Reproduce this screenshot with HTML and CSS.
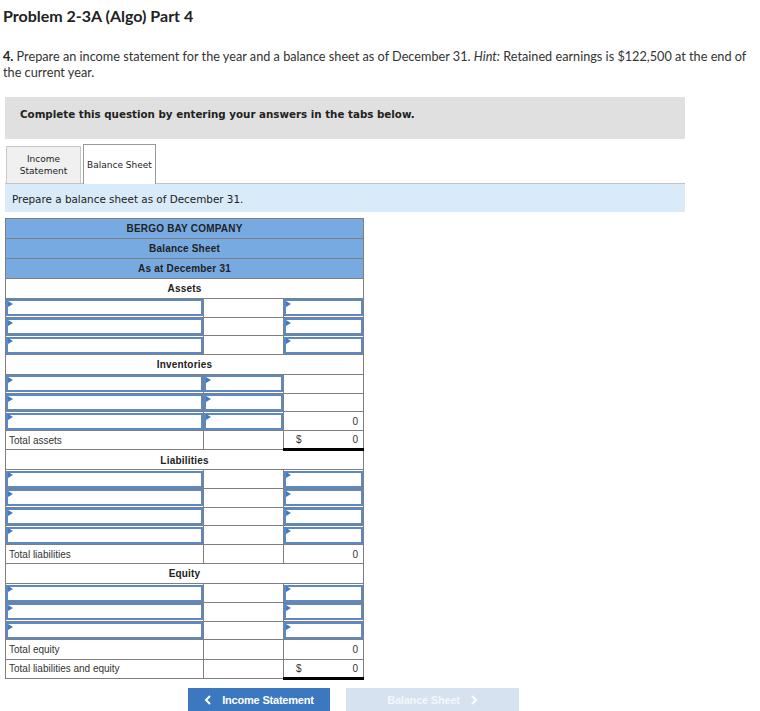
FILE: index.html
```html
<!DOCTYPE html>
<html lang="en">
<head>
  <meta charset="UTF-8" />
  <title>Problem 2-3A (Algo) Part 4</title>
  <link rel="stylesheet" href="styles.css">
</head>
<body>
  <div class="page">
    <h1>Problem 2-3A (Algo) Part 4</h1>
    <p class="prompt"><b>4.</b> Prepare an income statement for the year and a balance sheet as of December 31. <i>Hint:</i> Retained earnings is $122,500 at the end of the current year.</p>

    <div class="notice">Complete this question by entering your answers in the tabs below.</div>

    <div class="tabs">
      <div class="tab">Income<br>Statement</div>
      <div class="tab active">Balance Sheet</div>
    </div>
    <div class="instruct">Prepare a balance sheet as of December 31.</div>

    <table class="sheet">
      <colgroup><col class="c1"><col class="c2"><col class="c3"></colgroup>
      <tr class="hd"><td colspan="3">BERGO BAY COMPANY</td></tr>
      <tr class="hd"><td colspan="3">Balance Sheet</td></tr>
      <tr class="hd"><td colspan="3">As at December 31</td></tr>
      <tr class="sec"><td colspan="3">Assets</td></tr>
      <tr class="in"><td class="inp"><input><span class="flag"></span></td><td></td><td class="inp"><input><span class="flag"></span></td></tr>
      <tr class="in"><td class="inp"><input><span class="flag"></span></td><td></td><td class="inp"><input><span class="flag"></span></td></tr>
      <tr class="in"><td class="inp"><input><span class="flag"></span></td><td></td><td class="inp"><input><span class="flag"></span></td></tr>
      <tr class="sec"><td colspan="3">Inventories</td></tr>
      <tr class="in"><td class="inp"><input><span class="flag"></span></td><td class="inp"><input><span class="flag"></span></td><td></td></tr>
      <tr class="in"><td class="inp"><input><span class="flag"></span></td><td class="inp"><input><span class="flag"></span></td><td></td></tr>
      <tr class="in"><td class="inp"><input><span class="flag"></span></td><td class="inp"><input><span class="flag"></span></td><td class="num">0</td></tr>
      <tr class="tot"><td>Total assets</td><td class="rule"></td><td class="num rule dbl"><span class="cur">$</span>0</td></tr>
      <tr class="sec"><td colspan="3">Liabilities</td></tr>
      <tr class="in"><td class="inp"><input><span class="flag"></span></td><td></td><td class="inp"><input><span class="flag"></span></td></tr>
      <tr class="in"><td class="inp"><input><span class="flag"></span></td><td></td><td class="inp"><input><span class="flag"></span></td></tr>
      <tr class="in"><td class="inp"><input><span class="flag"></span></td><td></td><td class="inp"><input><span class="flag"></span></td></tr>
      <tr class="in"><td class="inp"><input><span class="flag"></span></td><td></td><td class="inp"><input><span class="flag"></span></td></tr>
      <tr class="tot"><td>Total liabilities</td><td></td><td class="num rule">0</td></tr>
      <tr class="sec"><td colspan="3">Equity</td></tr>
      <tr class="in"><td class="inp"><input><span class="flag"></span></td><td></td><td class="inp"><input><span class="flag"></span></td></tr>
      <tr class="in"><td class="inp"><input><span class="flag"></span></td><td></td><td class="inp"><input><span class="flag"></span></td></tr>
      <tr class="in"><td class="inp"><input><span class="flag"></span></td><td></td><td class="inp"><input><span class="flag"></span></td></tr>
      <tr class="tot"><td>Total equity</td><td></td><td class="num rule">0</td></tr>
      <tr class="tot"><td>Total liabilities and equity</td><td></td><td class="num rule dbl"><span class="cur">$</span>0</td></tr>
    </table>

    <div class="nav">
      <button class="btn prev">
        <svg width="8" height="10" viewBox="0 0 8 10"><polyline points="6,1 2,5 6,9" fill="none" stroke="#fff" stroke-width="2"/></svg>
        Income Statement
      </button>
      <button class="btn next" disabled>
        Balance Sheet
        <svg width="8" height="10" viewBox="0 0 8 10"><polyline points="2,1 6,5 2,9" fill="none" stroke="#fff" stroke-width="2"/></svg>
      </button>
    </div>
  </div>
</body>
</html>
```

FILE: styles.css
```css
html, body {
  margin: 0;
  padding: 0;
  background: #fff;
  color: #333;
  font-family: 'Lato', 'Liberation Sans', sans-serif;
}
.page {
  padding: 0 5px 0 5px;
}
h1 {
  margin: 0 0 0 -2px;
  padding-top: 6px;
  font-size: 16px;
  line-height: 20px;
  color: #222;
}
.prompt {
  margin: 22px -8px 0 -2px;
  font-size: 12.7px;
  line-height: 16px;
}
.prompt b { color: #222; }
.notice {
  margin-top: 17px;
  width: 680px;
  height: 42px;
  box-sizing: border-box;
  background: #e0e0e0;
  padding: 11px 0 0 15px;
  font-family: 'DejaVu Sans', Verdana, sans-serif;
  font-weight: bold;
  font-size: 10.3px;
  color: #222;
}
.tabs {
  margin-top: 5px;
  width: 680px;
  display: flex;
  align-items: flex-end;
  gap: 2px;
  border-bottom: 1px solid #c4c4c4;
  padding-left: 1px;
  box-sizing: border-box;
}
.tab {
  font-family: 'DejaVu Sans', Verdana, sans-serif;
  font-size: 9px;
  line-height: 12px;
  color: #222;
  text-align: center;
  background: #f0f0f0;
  border: 1px solid #c8c8c8;
  border-bottom: none;
  width: 73px;
  height: 36px;
  display: flex;
  align-items: center;
  justify-content: center;
}
.tab.active {
  background: #fff;
  border-color: #999;
  height: 39px;
  width: 71px;
  margin-bottom: -1px;
}
.instruct {
  width: 680px;
  height: 28px;
  box-sizing: border-box;
  background: #d9eaf8;
  padding: 9px 0 0 7px;
  font-family: 'DejaVu Sans', Verdana, sans-serif;
  font-size: 10.4px;
  color: #222;
}
.sheet {
  margin-top: 6px;
  border-collapse: collapse;
  width: 358px;
  table-layout: fixed;
  font-family: 'Liberation Sans', Arial, sans-serif;
  font-size: 10px;
  color: #333;
}
.sheet col.c1 { width: 198px; }
.sheet col.c2 { width: 80px; }
.sheet col.c3 { width: 80px; }
.sheet td {
  border: 1px solid #7f7f7f;
  padding: 0 3px;
  height: 18px;
  box-sizing: border-box;
}
.sheet tr.hd td {
  background: #78aae2;
  text-align: center;
  font-weight: bold;
  color: #222;
  height: 20px;
  letter-spacing: 0.2px;
}
.sheet tr.sec td {
  text-align: center;
  font-weight: bold;
  color: #222;
  height: 20px;
  letter-spacing: 0.2px;
}
.sheet tr.in td { height: 18.7px; }
.sheet tr.tot td { height: 19.2px; }
.sheet td.inp {
  padding: 0;
  position: relative;
}
.sheet td.inp input {
  display: block;
  width: 100%;
  height: 17px;
  box-sizing: border-box;
  border: 2px solid #5b89c5;
  margin: 0;
  padding: 0 4px;
  background: #fff;
}
.flag {
  position: absolute;
  top: 2px;
  left: 2px;
  width: 0;
  height: 0;
  border-top: 3px solid transparent;
  border-bottom: 3px solid transparent;
  border-left: 5px solid #3d7cc9;
}
.sheet td.num {
  text-align: right;
  padding-right: 5px;
}
.sheet td.rule { border-top: 1px solid #000; }
.sheet td.dbl { border-bottom: 3px solid #000; }
.cur {
  float: left;
  padding-left: 9px;
}
.nav {
  margin-top: 8px;
  display: flex;
  gap: 16px;
  padding-left: 183px;
}
.btn {
  height: 25px;
  border: none;
  border-radius: 0;
  font-family: 'Liberation Sans', Arial, sans-serif;
  font-weight: bold;
  font-size: 11px;
  letter-spacing: -0.2px;
  color: #fff;
  display: flex;
  align-items: center;
  justify-content: center;
  gap: 10px;
  padding: 0;
}
.btn.prev { background: #3b78bf; width: 142px; }
.btn.next { background: #d6e2f0; width: 173px; color: #f4f7fb; }
```
